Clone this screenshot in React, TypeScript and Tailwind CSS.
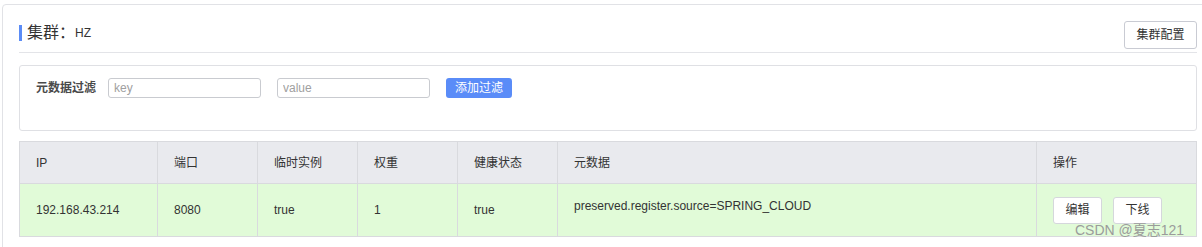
import React from "react";

const font = { fontFamily: '"Liberation Sans", "Noto Sans CJK SC", sans-serif' };

export default function App() {
  const cols = [
    { label: "IP", w: "w-[138px]" },
    { label: "端口", w: "w-[100px]" },
    { label: "临时实例", w: "w-[100px]" },
    { label: "权重", w: "w-[100px]" },
    { label: "健康状态", w: "w-[100px]" },
    { label: "元数据", w: "w-[479px]" },
    { label: "操作", w: "w-[160px]" },
  ];
  return (
    <div
      className="relative w-[1202px] h-[247px] overflow-hidden bg-white text-[#333] font-['Liberation_Sans','Noto_Sans_CJK_SC',sans-serif]"
      style={font}
    >
      <div className="ml-[2px] mt-[4px] w-[1213px] h-[260px] border border-[#e1e2e6] rounded-[4px] px-[16px] pt-[16px]">
        {/* header */}
        <div className="w-[1178px] flex items-center justify-between">
          <div className="flex items-center mb-[4px]">
            <div className="w-[3px] h-[16px] bg-[#5b8cf6]" />
            <span className="ml-[5px] text-[16px] leading-[20px] text-[#333]">集群：</span>
            <span className="text-[12px] leading-[20px] text-[#333]">HZ</span>
          </div>
          <button className="w-[73px] h-[28px] border border-[#c9cbd3] rounded-[3px] bg-white text-[12px] text-[#333]">
            集群配置
          </button>
        </div>
        <div className="w-[1178px] h-px bg-[#e3e4e8] mt-[3px]" />

        {/* filter */}
        <div className="mt-[12px] w-[1178px] h-[66px] border border-[#dfe0e4] rounded-[3px] px-[16px] pt-[12px]">
          <div className="flex items-center">
            <span className="text-[12px] font-semibold text-[#4a4a4a] w-[60px]">元数据过滤</span>
            <input
              className="ml-[12px] w-[153px] h-[20px] border border-[#c9cbd0] rounded-[3px] px-[5px] text-[12px] outline-none placeholder:text-[#a0a0a0]"
              placeholder="key"
            />
            <input
              className="ml-[16px] w-[153px] h-[20px] border border-[#c9cbd0] rounded-[3px] px-[5px] text-[12px] outline-none placeholder:text-[#a0a0a0]"
              placeholder="value"
            />
            <button className="ml-[16px] w-[66px] h-[20px] rounded-[3px] bg-[#5a8cf8] text-white text-[12px] leading-[20px]">
              添加过滤
            </button>
          </div>
        </div>

        {/* table */}
        <table className="mt-[10px] w-[1178px] border-collapse table-fixed text-[12px]">
          <thead>
            <tr className="bg-[#e9eaee] h-[42px]">
              {cols.map((c) => (
                <th
                  key={c.label}
                  className={`${c.w} border border-[#d9dade] px-[16px] text-left font-normal text-[#333]`}
                >
                  {c.label}
                </th>
              ))}
            </tr>
          </thead>
          <tbody>
            <tr className="bg-[#e1fbd8] h-[53px]">
              <td className="border border-[#d9dade] px-[16px] align-middle">192.168.43.214</td>
              <td className="border border-[#d9dade] px-[16px] align-middle">8080</td>
              <td className="border border-[#d9dade] px-[16px] align-middle">true</td>
              <td className="border border-[#d9dade] px-[16px] align-middle">1</td>
              <td className="border border-[#d9dade] px-[16px] align-middle">true</td>
              <td className="border border-[#d9dade] px-[16px] pt-[14px] align-top leading-[16px]">
                preserved.register.source=SPRING_CLOUD
              </td>
              <td className="border border-[#d9dade] px-[16px] align-middle">
                <div className="flex gap-[11px]">
                  <button className="w-[49px] h-[27px] border border-[#d5d7dc] rounded-[3px] bg-white text-[12px] text-[#333]">
                    编辑
                  </button>
                  <button className="w-[49px] h-[27px] border border-[#d5d7dc] rounded-[3px] bg-white text-[12px] text-[#333]">
                    下线
                  </button>
                </div>
              </td>
            </tr>
          </tbody>
        </table>
      </div>

      {/* watermark */}
      <div className="absolute left-[1075px] top-[221px] text-[14px] leading-[18px] text-[#9b9b9b] whitespace-nowrap">
        CSDN @夏志121
      </div>
    </div>
  );
}
